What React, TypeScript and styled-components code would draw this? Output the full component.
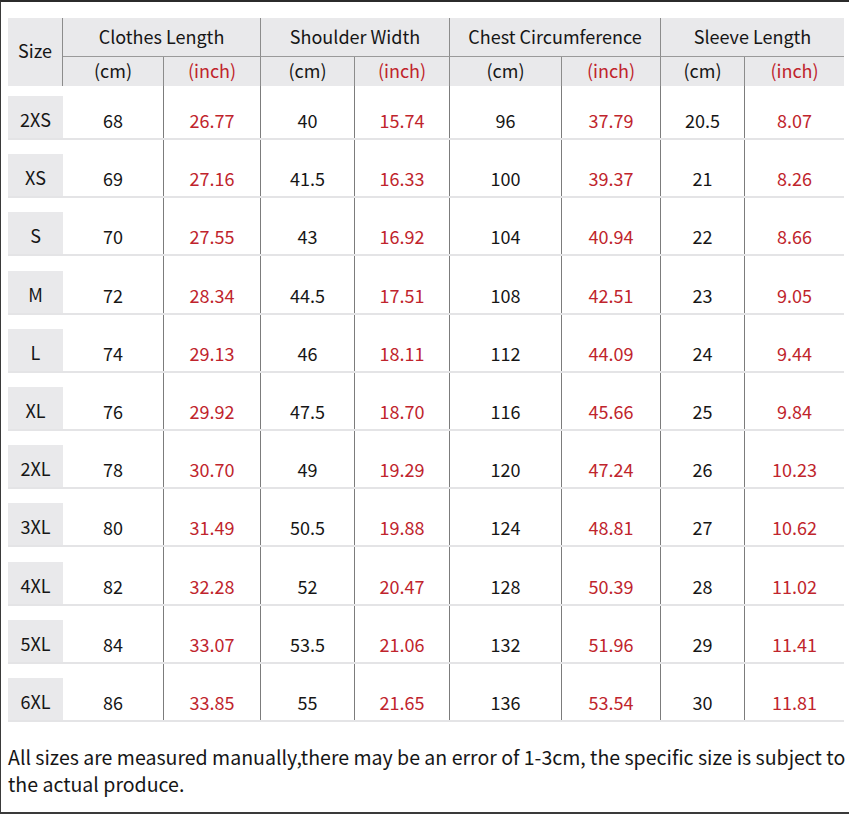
import React from "react";
import styled, { createGlobalStyle } from "styled-components";

const Global = createGlobalStyle`
  html, body { margin: 0; padding: 0; background: #fff; }
  body { font-family: "Noto Sans CJK SC", "Noto Sans", sans-serif; }
`;

const COLS = "55px 101px 97px 94px 95px 112px 99px 84px 99px";

const Frame = styled.div`
  position: relative;
  width: 849px;
  height: 814px;
  box-sizing: border-box;
  border-top: 2px solid #2b2b2b;
  border-left: 1px solid #3a3a3a;
  border-bottom: 2px solid #3a3a3a;
  padding: 16px 0 0 7px;
  overflow: hidden;
`;

const Table = styled.div`
  width: 836px;
`;

const HeaderGrid = styled.div`
  display: grid;
  grid-template-columns: ${COLS};
  grid-template-rows: 39px 29px;
  background: #e9e9eb;
  color: #161616;
  font-size: 18px;
`;

const SizeHead = styled.div`
  grid-row: 1 / span 2;
  grid-column: 1;
  display: flex;
  align-items: center;
  justify-content: center;
  border-right: 1px solid #8c8c8c;
  padding-bottom: 4px;
`;

const GroupHead = styled.div<{ $last?: boolean }>`
  grid-column: span 2;
  display: flex;
  align-items: center;
  justify-content: center;
  border-bottom: 1px solid #9a9a9a;
  border-right: ${(p) => (p.$last ? "none" : "1px solid #8c8c8c")};
  padding-bottom: 3px;
`;

const SubHead = styled.div<{ $red?: boolean; $line?: boolean }>`
  display: flex;
  align-items: center;
  justify-content: center;
  color: ${(p) => (p.$red ? "#c0242c" : "#161616")};
  border-right: ${(p) => (p.$line ? "1px solid #8c8c8c" : "none")};
  padding-bottom: 3px;
`;

const Row = styled.div<{ $first?: boolean }>`
  display: grid;
  grid-template-columns: ${COLS};
  height: ${(p) => (p.$first ? "54px" : "58.2px")};
  box-sizing: border-box;
  border-bottom: 2px solid #e4e4e6;
  font-size: 18px;
`;

const SizeCell = styled.div`
  align-self: end;
  height: 42px;
  box-sizing: border-box;
  padding-top: 4px;
  background: #e9e9eb;
  display: flex;
  align-items: center;
  justify-content: center;
  color: #161616;
`;

const Cell = styled.div<{ $red?: boolean; $line?: boolean }>`
  display: flex;
  align-items: flex-end;
  justify-content: center;
  padding-bottom: 5px;
  box-sizing: border-box;
  color: ${(p) => (p.$red ? "#c0242c" : "#161616")};
  border-right: ${(p) => (p.$line ? "1px solid #7c7c7c" : "none")};
`;

const Note = styled.div`
  margin-top: 21px;
  font-size: 19.55px;
  line-height: 27px;
  color: #161616;
  white-space: nowrap;
`;

const groups = ["Clothes Length", "Shoulder Width", "Chest Circumference", "Sleeve Length"];

const data: [string, string[]][] = [
  ["2XS", ["68", "26.77", "40", "15.74", "96", "37.79", "20.5", "8.07"]],
  ["XS", ["69", "27.16", "41.5", "16.33", "100", "39.37", "21", "8.26"]],
  ["S", ["70", "27.55", "43", "16.92", "104", "40.94", "22", "8.66"]],
  ["M", ["72", "28.34", "44.5", "17.51", "108", "42.51", "23", "9.05"]],
  ["L", ["74", "29.13", "46", "18.11", "112", "44.09", "24", "9.44"]],
  ["XL", ["76", "29.92", "47.5", "18.70", "116", "45.66", "25", "9.84"]],
  ["2XL", ["78", "30.70", "49", "19.29", "120", "47.24", "26", "10.23"]],
  ["3XL", ["80", "31.49", "50.5", "19.88", "124", "48.81", "27", "10.62"]],
  ["4XL", ["82", "32.28", "52", "20.47", "128", "50.39", "28", "11.02"]],
  ["5XL", ["84", "33.07", "53.5", "21.06", "132", "51.96", "29", "11.41"]],
  ["6XL", ["86", "33.85", "55", "21.65", "136", "53.54", "30", "11.81"]],
];

export default function App() {
  return (
    <>
      <Global />
      <Frame>
        <Table>
          <HeaderGrid>
            <SizeHead>Size</SizeHead>
            {groups.map((g, i) => (
              <GroupHead key={g} $last={i === groups.length - 1}>
                {g}
              </GroupHead>
            ))}
            {groups.map((g, i) => (
              <React.Fragment key={g + "sub"}>
                <SubHead $line>(cm)</SubHead>
                <SubHead $red $line={i < groups.length - 1}>(inch)</SubHead>
              </React.Fragment>
            ))}
          </HeaderGrid>
          {data.map(([size, vals], r) => (
            <Row key={size} $first={r === 0}>
              <SizeCell>{size}</SizeCell>
              {vals.map((v, i) => (
                <Cell key={i} $red={i % 2 === 1} $line={i < vals.length - 1}>
                  {v}
                </Cell>
              ))}
            </Row>
          ))}
        </Table>
        <Note>
          All sizes are measured manually,there may be an error of 1-3cm, the specific size is subject to
          <br />
          the actual produce.
        </Note>
      </Frame>
    </>
  );
}
